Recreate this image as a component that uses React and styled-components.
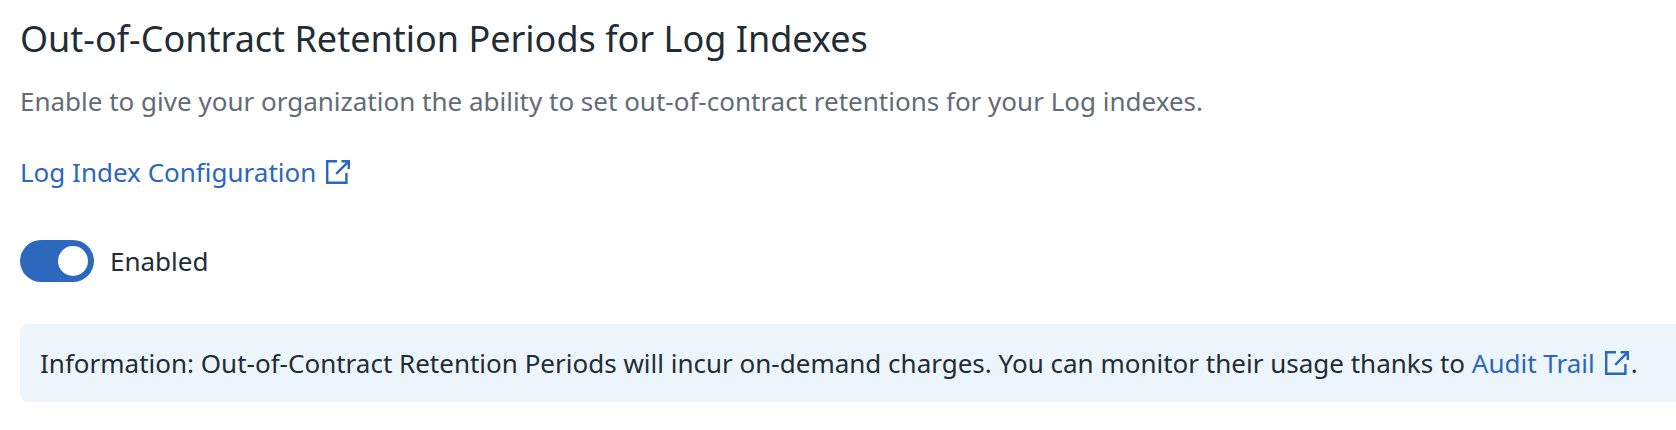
import React from 'react';
import styled, { createGlobalStyle } from 'styled-components';

const Global = createGlobalStyle`
  *, *::before, *::after { box-sizing: border-box; }
  body {
    margin: 0;
    background: #fff;
    color: #212d36;
    font: 26px/36px "Noto Sans", sans-serif;
  }
`;

const Section = styled.main`
  display: flex;
  flex-direction: column;
  align-items: flex-start;
  padding: 13px 0 27px 20px;
`;

const Title = styled.h1`
  margin: 0;
  font-size: 36px;
  line-height: 52px;
  font-weight: 400;
`;

const Description = styled.p`
  margin: 18px 0 0;
  color: #636c74;
`;

const Link = styled.a`
  color: #2a67bd;
  text-decoration: none;
  white-space: nowrap;
`;

const ConfigLink = styled(Link)`
  margin-top: 35px;
`;

const Icon = styled.svg`
  width: 24px;
  height: 24px;
  margin: 0 2px 0 10px;
  vertical-align: -2px;
`;

const ToggleRow = styled.label`
  display: flex;
  align-items: center;
  gap: 16px;
  margin-top: 50px;
  height: 42px;
  cursor: pointer;
`;

const Toggle = styled.input`
  appearance: none;
  display: flex;
  width: 74px;
  height: 42px;
  margin: 0;
  padding: 6px;
  border-radius: 21px;
  background: #a0a6ad;
  cursor: pointer;

  &::before {
    content: "";
    width: 30px;
    height: 30px;
    border-radius: 50%;
    background: #fff;
  }

  &:checked {
    justify-content: flex-end;
    background: #2c69be;
  }
`;

const Notice = styled.p`
  align-self: stretch;
  margin: 42px 0 0;
  padding: 21px 20px;
  border-radius: 8px 0 0 8px;
  background: #edf5fc;
`;

function ExternalIcon() {
  return (
    <Icon viewBox="0 0 24 24" fill="none" stroke="currentColor" strokeWidth="2.4" aria-hidden="true">
      <path d="M11 1.2H1.2v21.6h19.2V13M15.5 1.2h7.3V9M22.8 1.2L10.2 13.8" />
    </Icon>
  );
}

export default function App() {
  return (
    <>
      <Global />
      <Section>
        <Title>Out-of-Contract Retention Periods for Log Indexes</Title>
        <Description>
          Enable to give your organization the ability to set out-of-contract retentions for your Log indexes.
        </Description>
        <ConfigLink href="#log-index-configuration">
          Log Index Configuration
          <ExternalIcon />
        </ConfigLink>
        <ToggleRow>
          <Toggle type="checkbox" role="switch" defaultChecked />
          Enabled
        </ToggleRow>
        <Notice>
          Information: Out-of-Contract Retention Periods will incur on-demand charges. You can monitor their usage thanks to{' '}
          <Link href="#audit-trail">
            Audit Trail
            <ExternalIcon />
          </Link>
          .
        </Notice>
      </Section>
    </>
  );
}
